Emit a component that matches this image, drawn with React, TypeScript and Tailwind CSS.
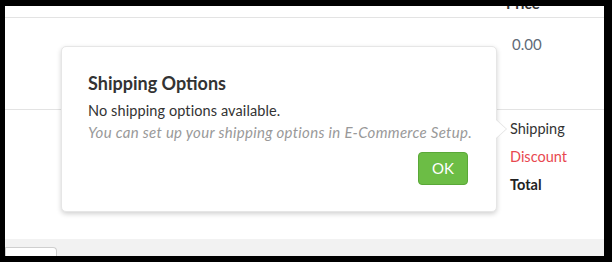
import React from "react";

export default function App() {
  const font = { fontFamily: "Lato, 'Open Sans', sans-serif" };
  return (
    <div className="w-[612px] h-[262px] bg-black pt-[6px] pl-[5px] pr-[8px] pb-[6px]" style={font}>
      <div className="relative w-full h-full bg-white flex flex-col overflow-hidden">
        {/* header */}
        <div className="h-[12px] border-b border-[#e3e3e3] overflow-hidden flex">
          <div className="ml-[501px] -mt-[12px] text-[15px] leading-[18px] font-bold text-[#333]">Price</div>
        </div>
        {/* item row */}
        <div className="h-[92px] border-b border-[#e3e3e3] flex">
          <div className="ml-[507px] mt-[16px] text-[15px] leading-[20px] text-[#5f6a78]">0.00</div>
        </div>
        {/* totals */}
        <div className="flex-1 flex">
          <div className="ml-[505px] mt-[9px] flex flex-col gap-[8px] text-[14.5px] leading-[20px]">
            <div className="text-[#333]">Shipping</div>
            <div className="text-[#e8484f]">Discount</div>
            <div className="text-[#222] font-bold">Total</div>
          </div>
        </div>
        {/* footer */}
        <div className="h-[17px] bg-[#f2f2f2] flex items-end">
          <div className="w-[52px] h-[9px] bg-white border border-[#cfcfcf] border-b-0 rounded-tr-[4px]" />
        </div>

        {/* popover */}
        <div className="absolute left-[56px] top-[40px] w-[436px] h-[166px] bg-white rounded-[5px] border border-[#e6e6e6] shadow-[0_2px_5px_rgba(0,0,0,0.18)] pl-[26px] pr-[28px] pt-[25px]">
          <div className="absolute -right-[11px] top-[72px] w-0 h-0 border-y-[10px] border-y-transparent border-l-[11px] border-l-[#e2e2e2]" />
          <div className="absolute -right-[10px] top-[73px] w-0 h-0 border-y-[9px] border-y-transparent border-l-[10px] border-l-white" />
          <div className="text-[18px] leading-[22px] font-bold text-[#333]">Shipping Options</div>
          <div className="mt-[7px] text-[14.5px] leading-[20px] tracking-[0.1px] text-[#333] whitespace-nowrap">No shipping options available.</div>
          <div className="mt-[1px] text-[15px] leading-[20px] tracking-[0.3px] italic text-[#999] whitespace-nowrap">You can set up your shipping options in E-Commerce Setup.</div>
          <div className="flex justify-end mt-[10px]">
            <button className="w-[50px] h-[33px] rounded-[4px] bg-[#6cbd45] border border-[#5aa838] text-white text-[15px]">OK</button>
          </div>
        </div>
      </div>
    </div>
  );
}
